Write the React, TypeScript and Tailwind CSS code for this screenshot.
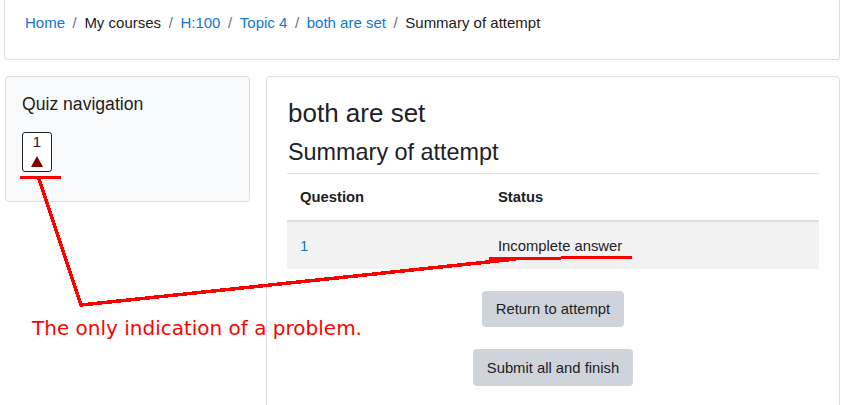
import React from 'react';

const crumbs = [
  { label: 'Home', link: true },
  { label: 'My courses', link: false },
  { label: 'H:100', link: true },
  { label: 'Topic 4', link: true },
  { label: 'both are set', link: true },
  { label: 'Summary of attempt', link: false },
];

const Annotations = () => (
  <>
    <svg className="absolute left-0 top-0 pointer-events-none" width="851" height="405" fill="none" stroke="#ff0000" strokeWidth="3.5" shapeRendering="crispEdges">
      <path d="M20 177.5H61" strokeWidth="3" />
      <path d="M39 179L81 305L516 259" />
      <path d="M489 258.5H561" strokeWidth="3" />
      <path d="M561 257.5H632" strokeWidth="3" />
    </svg>
    <div className="absolute left-[32px] top-[315px] text-[20px] leading-[26px] text-[#ff0000] font-['DejaVu_Sans',sans-serif] whitespace-nowrap">
      The only indication of a problem.
    </div>
  </>
);

export default function App() {
  return (
    <div className="relative w-[851px] h-[405px] overflow-hidden bg-white pl-[4px] pr-[11px] font-['Liberation_Sans',sans-serif] text-[15px] leading-[22px] text-[#1d2125]">
      <div className="h-[60px] border border-t-0 border-[#dcdde0] rounded-b-[4px] pl-[20px] pt-[12px]">
        <div className="flex items-center">
          {crumbs.map((c, i) => (
            <React.Fragment key={c.label}>
              {i > 0 && <span className="px-[7.6px] text-[#6a737b]">/</span>}
              <span className={c.link ? 'text-[#1177d1]' : ''}>{c.label}</span>
            </React.Fragment>
          ))}
        </div>
      </div>

      <div className="flex mt-[16px] pl-[1px] gap-[16px]">
        <div className="w-[245px] h-[126px] shrink-0 bg-[#f8f9fa] border border-[#dcdde0] rounded-[4px] pl-[16px] pt-[16px]">
          <h5 className="text-[17.6px] leading-[22px] text-[#1d2125]">Quiz navigation</h5>
          <div className="mt-[17px] w-[30px] h-[40px] bg-white border border-[#1d2125] rounded-[3px] flex flex-col items-center">
            <span className="text-[15px] leading-[18px]">1</span>
            <svg className="mt-[5px]" width="12" height="11" viewBox="0 0 12 11">
              <path d="M6 0L12 11H0Z" fill="#800000" />
            </svg>
          </div>
        </div>

        <div className="flex-1 h-[340px] bg-white border border-[#dcdde0] rounded-[4px] pl-[20px] pr-[20px] pt-[21px]">
          <h2 className="text-[26px] leading-[31px] pl-[1px]">both are set</h2>
          <h3 className="mt-[9px] text-[23.4px] leading-[28px] pl-[1px]">Summary of attempt</h3>
          <div className="mt-[7px] border-t border-[#dee2e6] text-[14.8px]">
            <div className="flex h-[48px] items-center border-b-2 border-[#dee2e6] font-bold">
              <div className="w-[211px] pl-[13px]">Question</div>
              <div>Status</div>
            </div>
            <div className="flex h-[47px] items-center bg-[#f2f2f2]">
              <div className="w-[211px] pl-[13px] text-[#1177d1]">1</div>
              <div>Incomplete answer</div>
            </div>
          </div>
          <div className="flex flex-col items-center mt-[22px] gap-[22px] text-[14.8px]">
            <button className="h-[36px] px-[13.5px] bg-[#ced4da] rounded-[4px] text-[#1d2125]">Return to attempt</button>
            <button className="h-[37px] px-[13.5px] bg-[#ced4da] rounded-[4px] text-[#1d2125]">Submit all and finish</button>
          </div>
        </div>
      </div>

      <Annotations />
    </div>
  );
}
